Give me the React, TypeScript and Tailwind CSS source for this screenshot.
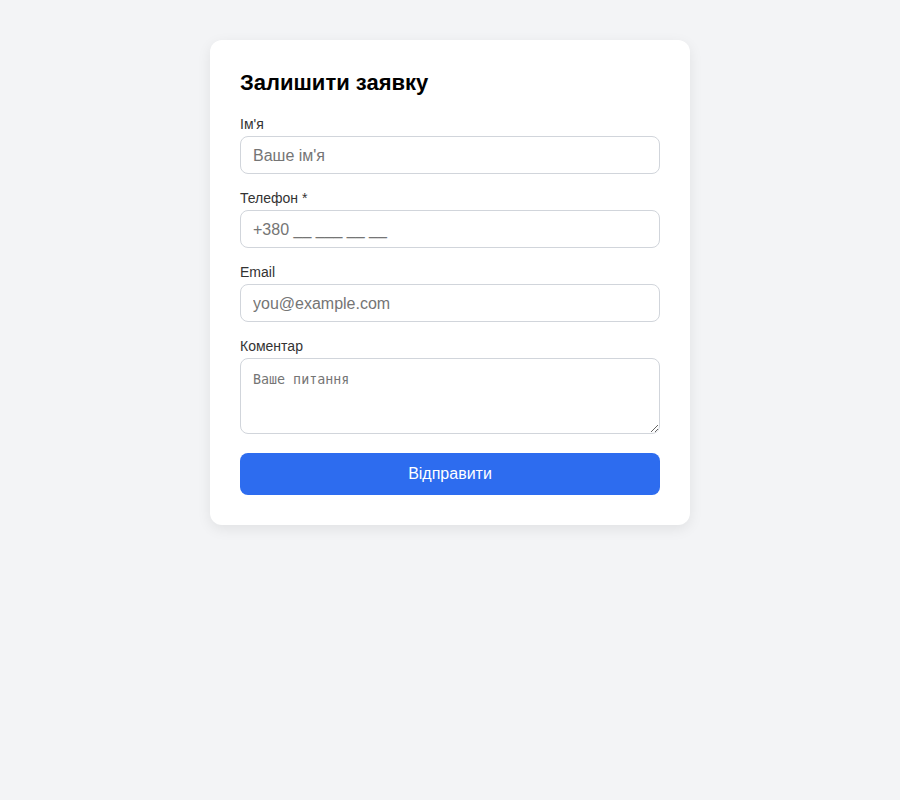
import React from "react";

export default function App() {
  const inputCls =
    "block w-full h-[38px] rounded-lg border border-[#d1d5db] bg-white px-3 pt-[2px] text-[16px] text-[#111] placeholder:text-[#757575] outline-none";
  return (
    <div className="min-h-screen bg-[#f3f4f6] pt-10" style={{ fontFamily: '"Liberation Sans", Arial, sans-serif' }}>
      <div className="mx-auto w-[480px] rounded-xl bg-white p-[30px] shadow-[0_4px_14px_rgba(0,0,0,0.08)]">
        <h2 className="m-0 text-[22px] font-bold leading-[25px] text-black mb-[21px]">Залишити заявку</h2>
        <form onSubmit={(e) => e.preventDefault()}>
          <label className="block text-[14px] leading-4 text-[#333] mb-1">Ім'я</label>
          <input className={inputCls + " mb-4"} placeholder="Ваше ім'я" />
          <label className="block text-[14px] leading-4 text-[#333] mb-1">Телефон *</label>
          <input className={inputCls + " mb-4"} placeholder="+380 __ ___ __ __" />
          <label className="block text-[14px] leading-4 text-[#333] mb-1">Email</label>
          <input className={inputCls + " mb-4"} placeholder="you@example.com" />
          <label className="block text-[14px] leading-4 text-[#333] mb-1">Коментар</label>
          <textarea
            className="block w-full h-[76px] rounded-lg border border-[#d1d5db] bg-white px-3 pt-[11px] pb-[9px] text-[13.33px] text-[#111] placeholder:text-[#757575] outline-none mb-[19px]"
            style={{ fontFamily: '"DejaVu Sans Mono", "Liberation Mono", monospace' }}
            placeholder="Ваше питання"
          />
          <button
            type="submit"
            className="block w-full h-[42px] rounded-lg bg-[#2d6cef] text-white text-[16px]"
          >
            Відправити
          </button>
        </form>
      </div>
    </div>
  );
}
